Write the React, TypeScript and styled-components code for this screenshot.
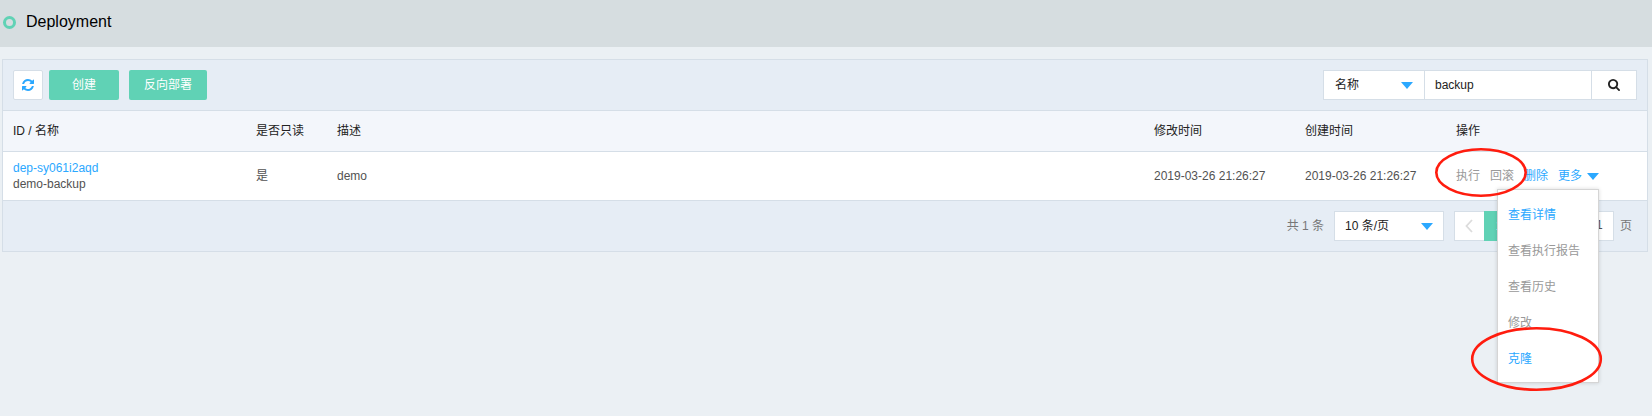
import React from 'react';
import styled, { createGlobalStyle } from 'styled-components';

const LINE = '#d5dee7';
const BLUE = '#2ba8ff';
const GREEN = '#60d2b5';

const GlobalStyle = createGlobalStyle`
  * { box-sizing: border-box; }
  body {
    margin: 0;
    background: #ebf0f4;
    color: #525252;
    font: 12px/16px "Liberation Sans", "Noto Sans CJK SC", sans-serif;
  }
  button, input { font: inherit; }
`;

const Page = styled.div`
  min-height: 416px;
  overflow: hidden;
`;

const TitleBar = styled.header`
  display: flex;
  align-items: center;
  gap: 11px;
  height: 47px;
  padding: 0 0 4px 3px;
  background: #d6dde0;
`;

const Ring = styled.span`
  width: 13px;
  height: 13px;
  margin-top: 1px;
  border: 3px solid ${GREEN};
  border-radius: 50%;
`;

const Title = styled.h1`
  margin: 0 0 0 -1px;
  color: #000;
  font-size: 16px;
  font-weight: 400;
  line-height: 20px;
`;

const Panel = styled.main`
  width: 1646px;
  margin: 12px 0 0 2px;
  border: 1px solid ${LINE};
  background: #e6edf5;
`;

const Toolbar = styled.div`
  display: flex;
  align-items: center;
  height: 51px;
  padding: 0 10px;
  border-bottom: 1px solid ${LINE};
`;

const IconButton = styled.button`
  display: flex;
  align-items: center;
  justify-content: center;
  width: 30px;
  height: 30px;
  padding: 0;
  margin-right: 6px;
  border: 1px solid ${LINE};
  border-radius: 2px;
  background: #fff;
  color: ${BLUE};
`;

const PrimaryButton = styled.button<{ $width: number }>`
  width: ${p => p.$width}px;
  height: 30px;
  margin-right: 10px;
  padding: 0;
  border: 0;
  border-radius: 2px;
  background: ${GREEN};
  color: #fff;
`;

const SearchGroup = styled.div`
  display: flex;
  width: 314px;
  height: 30px;
  margin-left: auto;
  border: 1px solid ${LINE};
  background: #fff;
  color: #222;
`;

const SearchField = styled.div`
  display: flex;
  align-items: center;
  justify-content: space-between;
  width: 101px;
  padding: 0 11px 0 11px;
  border-right: 1px solid ${LINE};
`;

const SearchInput = styled.input`
  width: 167px;
  padding: 0 0 1px 10px;
  border: 0;
  border-right: 1px solid ${LINE};
  outline: 0;
  background: #fff;
  color: #222;
`;

const SearchButton = styled.button`
  display: flex;
  flex: 1;
  align-items: center;
  justify-content: center;
  padding: 0 1px 1px 0;
  border: 0;
  background: none;
  color: #222;
`;

const Row = styled.div<{ $head?: boolean }>`
  display: grid;
  grid-template-columns: 243px 81px 817px 151px 151px 1fr;
  align-items: center;
  height: ${p => (p.$head ? 41 : 49)}px;
  padding-left: 10px;
  border-bottom: 1px solid ${LINE};
  background: ${p => (p.$head ? '#f3f6fb' : '#fff')};
  color: ${p => (p.$head ? '#222' : '#525252')};
`;

const IdLink = styled.a`
  display: block;
  color: ${BLUE};
`;

const Actions = styled.div`
  position: relative;
  display: flex;
  align-items: center;
  gap: 10px;
`;

const Action = styled.span<{ $enabled?: boolean }>`
  display: flex;
  align-items: center;
  gap: 5px;
  color: ${p => (p.$enabled ? BLUE : '#999')};
`;

const Caret = styled.i`
  width: 0;
  height: 0;
  border: 6px solid transparent;
  border-top: 7px solid ${BLUE};
  border-bottom: 0;
`;

const Menu = styled.ul`
  position: absolute;
  z-index: 2;
  top: 21px;
  left: 41px;
  width: 102px;
  height: 194px;
  margin: 0;
  padding: 7px 0;
  border: 1px solid #d5d5d5;
  background: #fff;
  box-shadow: 0 0 4px rgba(0, 0, 0, 0.15);
  list-style: none;
`;

const MenuItem = styled.li<{ $enabled?: boolean }>`
  height: 36px;
  padding-left: 10px;
  line-height: 36px;
  color: ${p => (p.$enabled ? BLUE : '#999')};
`;

const Footer = styled.footer`
  display: flex;
  align-items: center;
  justify-content: flex-end;
  height: 50px;
  padding-right: 15px;
  color: #777;
`;

const PageSize = styled.div`
  display: flex;
  align-items: center;
  justify-content: space-between;
  width: 110px;
  height: 30px;
  margin: 0 10px;
  padding: 0 10px;
  border: 1px solid ${LINE};
  background: #fff;
  color: #222;
`;

const Pager = styled.div`
  display: flex;
  width: 90px;
  height: 30px;
  border: 1px solid ${LINE};
  background: #fff;
`;

const PagerStep = styled.span`
  display: flex;
  align-items: center;
  justify-content: center;
  width: 29px;
`;

const CurrentPage = styled.span`
  width: 30px;
  margin: -1px 0;
  background: ${GREEN};
  color: #fff;
  line-height: 30px;
  text-align: center;
`;

const PageJump = styled.div`
  width: 40px;
  height: 30px;
  margin: 0 6px 0 30px;
  border: 1px solid ${LINE};
  background: #fff;
  color: #525252;
  line-height: 27px;
  padding-left: 21px;
`;

const Marker = styled.svg<{ $x: number; $y: number }>`
  position: absolute;
  z-index: 3;
  left: ${p => p.$x}px;
  top: ${p => p.$y}px;
  fill: none;
  stroke: #ff1c0e;
  stroke-width: 2.6;
  pointer-events: none;
`;

const RefreshIcon = () => (
  <svg width="14" height="14" viewBox="0 0 1792 1792" fill="currentColor">
    <path d="M1639 1056q0 5-1 7-64 268-268 434.5t-478 166.5q-146 0-282.5-55t-243.5-157l-129 129q-19 19-45 19t-45-19-19-45v-448q0-26 19-45t45-19h448q26 0 45 19t19 45-19 45l-137 137q71 66 161 102t187 36q134 0 250-65t186-179q11-17 53-117 8-23 30-23h192q13 0 22.5 9.5t9.5 22.5zm25-800v448q0 26-19 45t-45 19h-448q-26 0-45-19t-19-45 19-45l138-138q-148-137-349-137-134 0-250 65t-186 179q-11 17-53 117-8 23-30 23h-199q-13 0-22.5-9.5t-9.5-22.5v-7q65-268 270-434.5t480-166.5q146 0 284 55.5t245 156.5l130-129q19-19 45-19t45 19 19 45z" />
  </svg>
);

const SearchIcon = () => (
  <svg width="12" height="12" viewBox="64 128 1664 1664" fill="currentColor">
    <path d="M1216 832q0-185-131.5-316.5t-316.5-131.5-316.5 131.5-131.5 316.5 131.5 316.5 316.5 131.5 316.5-131.5 131.5-316.5zm512 832q0 52-38 90t-90 38q-54 0-90-38l-343-342q-179 124-399 124-143 0-273.5-55.5t-225-150-150-225-55.5-273.5 55.5-273.5 150-225 225-150 273.5-55.5 273.5 55.5 225 150 150 225 55.5 273.5q0 220-124 399l343 343q37 37 37 90z" />
  </svg>
);

const Chevron = ({ flip }: { flip?: boolean }) => (
  <svg width="8" height="14" viewBox="0 0 8 14" fill="none" stroke="#dcdcdc" strokeWidth="1.8">
    <path d={flip ? 'M1 1l5.5 6L1 13' : 'M7 1L1.5 7 7 13'} />
  </svg>
);

const columns = ['ID / 名称', '是否只读', '描述', '修改时间', '创建时间', '操作'];

const menuItems = [
  { label: '查看详情', enabled: true },
  { label: '查看执行报告' },
  { label: '查看历史' },
  { label: '修改' },
  { label: '克隆', enabled: true },
];

export default function App() {
  return (
    <Page>
      <GlobalStyle />
      <TitleBar>
        <Ring />
        <Title>Deployment</Title>
      </TitleBar>
      <Panel>
        <Toolbar>
          <IconButton aria-label="refresh"><RefreshIcon /></IconButton>
          <PrimaryButton $width={70}>创建</PrimaryButton>
          <PrimaryButton $width={78}>反向部署</PrimaryButton>
          <SearchGroup>
            <SearchField>名称<Caret /></SearchField>
            <SearchInput defaultValue="backup" />
            <SearchButton aria-label="search"><SearchIcon /></SearchButton>
          </SearchGroup>
        </Toolbar>
        <Row $head>
          {columns.map(c => <span key={c}>{c}</span>)}
        </Row>
        <Row>
          <div>
            <IdLink>dep-sy061i2aqd</IdLink>
            demo-backup
          </div>
          <span>是</span>
          <span>demo</span>
          <span>2019-03-26 21:26:27</span>
          <span>2019-03-26 21:26:27</span>
          <Actions>
            <Action>执行</Action>
            <Action>回滚</Action>
            <Action $enabled>删除</Action>
            <Action $enabled>更多<Caret /></Action>
            <Menu>
              {menuItems.map(m => (
                <MenuItem key={m.label} $enabled={m.enabled}>{m.label}</MenuItem>
              ))}
            </Menu>
            <Marker $x={-22} $y={-21} width="94" height="51">
              <ellipse cx="47" cy="25.5" rx="44.7" ry="23.2" />
            </Marker>
            <Marker $x={14} $y={158} width="133" height="66">
              <ellipse cx="66.5" cy="33" rx="64.3" ry="30.7" />
            </Marker>
          </Actions>
        </Row>
        <Footer>
          <span>共 1 条</span>
          <PageSize>10 条/页<Caret /></PageSize>
          <Pager>
            <PagerStep><Chevron /></PagerStep>
            <CurrentPage>1</CurrentPage>
            <PagerStep><Chevron flip /></PagerStep>
          </Pager>
          <PageJump>1</PageJump>
          <span>页</span>
        </Footer>
      </Panel>
    </Page>
  );
}
